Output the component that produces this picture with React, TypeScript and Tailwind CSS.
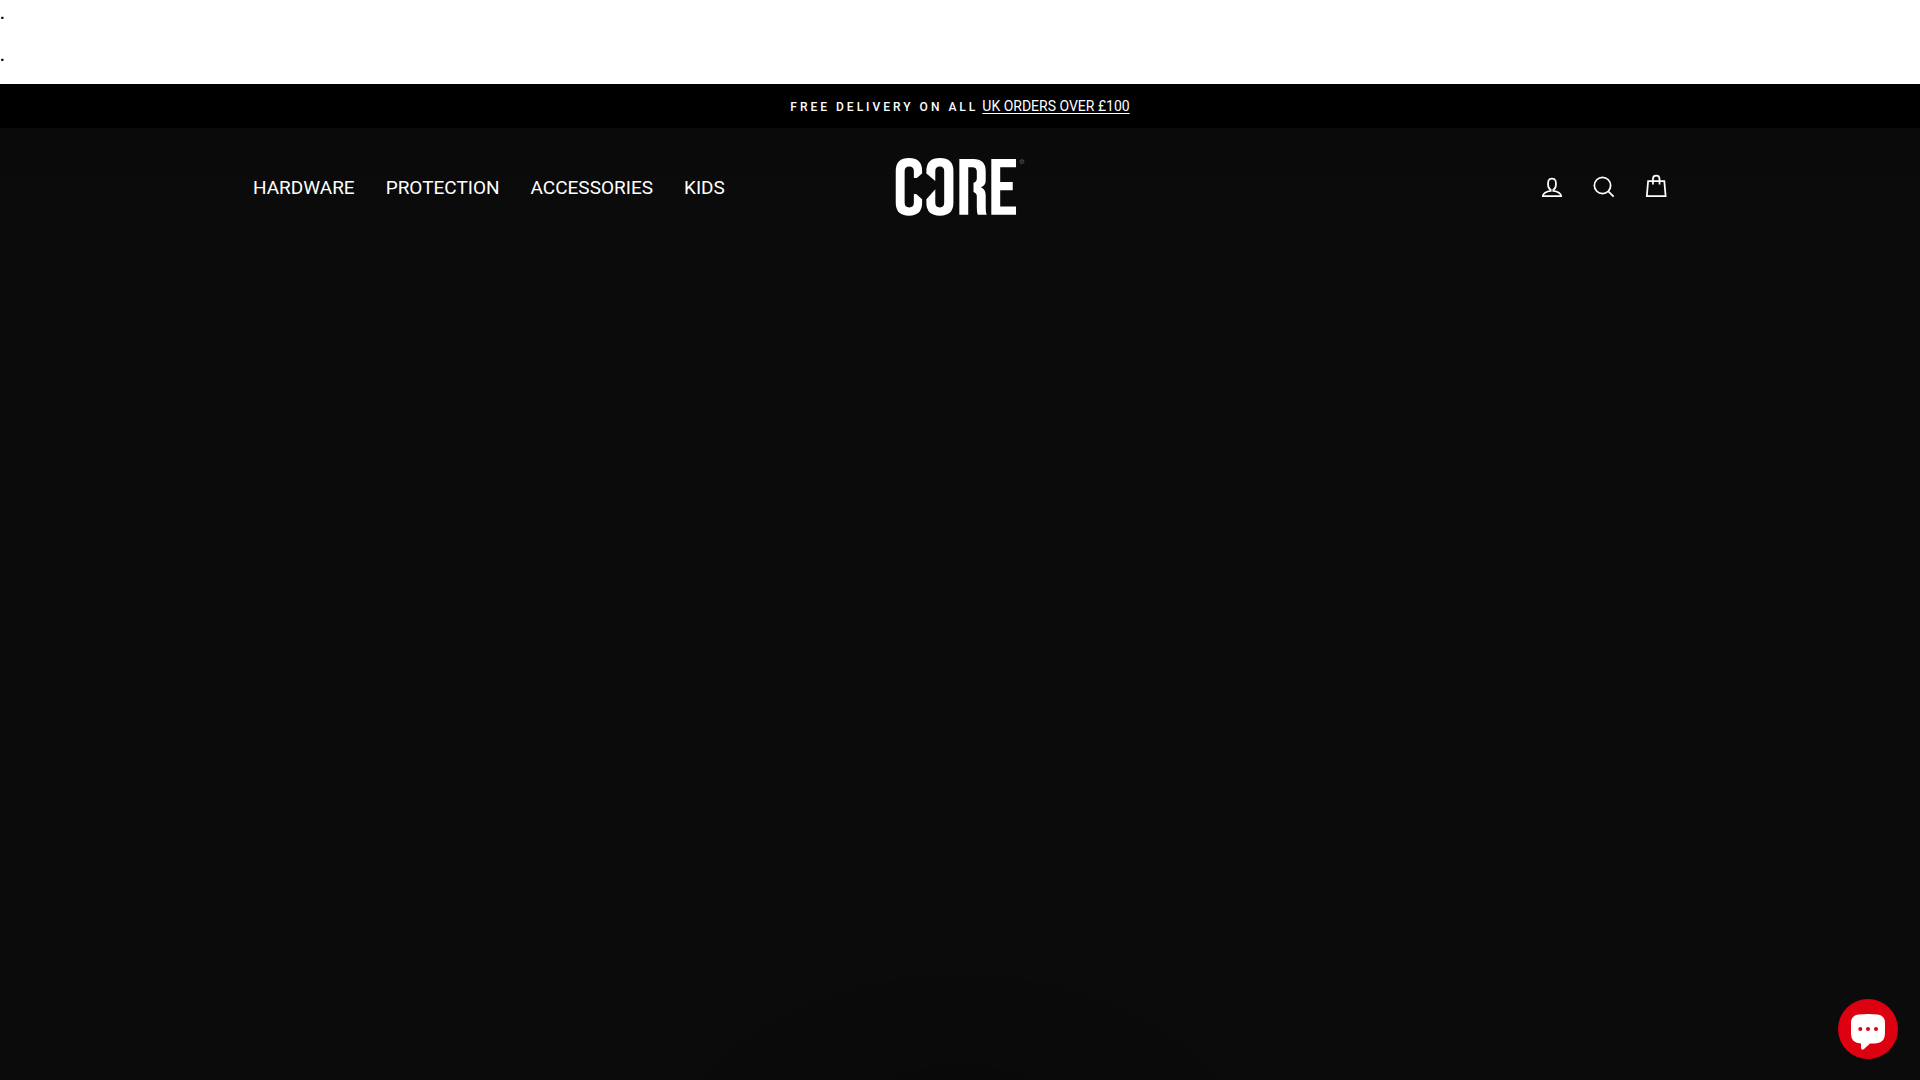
const links = ["HARDWARE", "PROTECTION", "ACCESSORIES", "KIDS"];

function Logo() {
  return (
    <svg viewBox="44 38 392 176" className="h-[58px] w-[130px]" fill="#fff" aria-hidden="true">
      <path d="M125 85 109 99H100V78Q100 64 86 64Q72 64 72 78V174Q72 188 86 188Q100 188 100 174V147H107L125 163V174Q125 213 85 213Q45 213 45 174V77Q45 38 85 38Q125 38 125 77Z" />
      <path d="M138 85V77Q138 38 179 38Q220 38 220 77V174Q220 213 179 213Q138 213 138 174V163L165 133V174Q165 188 179 188Q192 188 192 174V78Q192 64 179 64Q165 64 165 78V108Z" />
      <path fillRule="evenodd" d="M238 41H280Q318 41 318 78V107Q318 121 303 127Q318 134 318 150V190Q318 203 321 210H294Q291 203 291 188V153Q291 145 281 141V113Q291 110 291 100V79Q291 66 277 66H265V210H238Z" />
      <path d="M335 41H410V66H362V111H400V136H362V185H410V210H335Z" />
      <circle cx="428" cy="49" r="6" fill="none" stroke="#666" strokeWidth="2" />
      <path d="M427 46v6M427 46h2v3h-2" fill="none" stroke="#666" strokeWidth="1.5" />
    </svg>
  );
}

export default function App() {
  return (
    <div className="flex min-h-screen flex-col bg-[#0b0b0b] font-[Roboto,sans-serif] text-white">
      <div className="bg-white text-base leading-7 font-bold text-black">
        <p className="mb-3.5">.</p>
        <p className="pb-3.5">.</p>
      </div>
      <div className="flex h-11 items-center justify-center bg-black">
        <p className="flex items-baseline gap-1">
          <span className="text-xs font-medium tracking-[0.25em]">FREE DELIVERY ON ALL</span>
          <a href="#uk" className="text-sm underline underline-offset-2">UK ORDERS OVER £100</a>
        </p>
      </div>
      <header className="bg-linear-to-b from-[#0a0a0a] to-[#0b0b0b]">
        <div className="mx-auto grid h-[118px] w-full max-w-[1500px] grid-cols-[1fr_auto_1fr] items-center px-10">
          <nav className="flex gap-[31px] pt-0.5 pl-[3px]">
            {links.map((l) => (
              <a key={l} href={`#${l.toLowerCase()}`} className="text-[19px] leading-7">{l}</a>
            ))}
          </nav>
          <a href="#home" aria-label="CORE"><Logo /></a>
          <div className="flex justify-end gap-6 text-white">
            <button aria-label="Log in">
              <svg viewBox="0 0 64 64" className="size-7" fill="none" stroke="currentColor" strokeWidth="4">
                <path d="M35 40.840v-2.530c3.300-1.910 6-6.660 6-11.410 0-7.630 0-13.820-9-13.820s-9 6.190-9 13.820c0 4.750 2.700 9.510 6 11.410v2.530c-10.180.850-18 6-18 12.160h42c0-6.190-7.820-11.310-18-12.160z" />
              </svg>
            </button>
            <button aria-label="Search">
              <svg viewBox="0 0 64 64" className="size-7" fill="none" stroke="currentColor" strokeWidth="4">
                <path d="M47.16 28.58A18.58 18.58 0 1 1 28.58 10a18.58 18.58 0 0 1 18.58 18.58zM54 54 41.94 42" />
              </svg>
            </button>
            <button aria-label="Cart">
              <svg viewBox="0 0 64 64" className="size-7" fill="none" stroke="currentColor" strokeWidth="4">
                <path d="M14 18.500h37L54 53H11zM25 26V14c0-11 15-11 15 0V26" />
              </svg>
            </button>
          </div>
        </div>
      </header>
      <main className="flex-1 bg-[radial-gradient(ellipse_290px_195px_at_50%_calc(100%+90px),#090909_0,#090909_54%,#0a0a0a_54%,#0a0a0a_100%,#0b0b0b_100%)]" />
      <button aria-label="Chat" className="fixed right-[22px] bottom-[21px] flex size-[60px] items-center justify-center rounded-full bg-[#dd0010]">
        <svg viewBox="0 0 60 60" className="size-[60px]">
          <path d="M20 15.500Q30 14.500 40 15.500Q47 16.500 47 24V34Q47 42.500 40 44Q36 44.700 32 44.500L26 50Q23 52 23 48V44.500Q13 44 13 35V24Q13 16.500 20 15.500Z" fill="#fff" />
          <g fill="#dd0010"><circle cx="22.300" cy="30" r="2" /><circle cx="30" cy="30" r="2" /><circle cx="38" cy="30" r="2" /></g>
        </svg>
      </button>
    </div>
  );
}
